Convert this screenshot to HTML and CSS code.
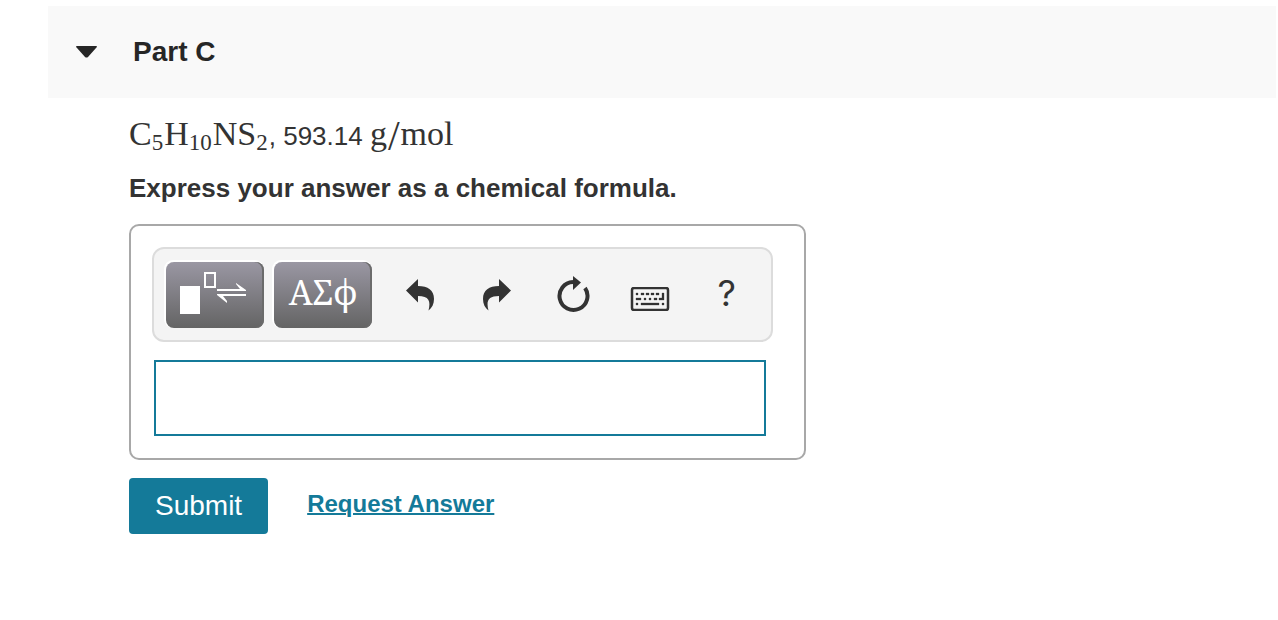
FILE: index.html
```html
<!DOCTYPE html>
<html lang="en">
<head>
<meta charset="utf-8">
<title>Part C</title>
<link rel="stylesheet" href="styles.css">
</head>
<body>
<main class="page">
  <header class="part-header">
    <button class="part-toggle" type="button" aria-expanded="true">
      <svg class="caret" viewBox="0 0 22 12" aria-hidden="true"><path d="M1 0H20Q22 0 20 2L12 11Q10.500 12 9 11L1 2Q-1 0 1 0Z" fill="currentColor"/></svg>
      <span>Part C</span>
    </button>
  </header>
  <section class="content">
    <p class="question"><span class="math">C<sub>5</sub>H<sub>10</sub>NS<sub>2</sub></span>, 593.14 <span class="math">g<span class="slash">/</span>mol</span></p>
    <label class="prompt" for="answer">Express your answer as a chemical formula.</label>
    <div class="answer-box">
      <div class="toolbar" role="toolbar" aria-label="Formula tools">
        <div class="palettes">
          <button class="palette" type="button" aria-label="Templates">
            <svg viewBox="0 0 98 66" fill="#fff" aria-hidden="true"><path d="M14 24H34V52H14Z"/><path d="M38 10H50V26H38ZM40 12V24H48V12Z" fill-rule="evenodd"/><path d="M51 27H74L70 22V21L80 28V29H51Z"/><path d="M80 34H57L61 39V41L51 33V32H80Z"/></svg>
          </button>
          <button class="palette greek" type="button">ΑΣϕ</button>
        </div>
        <div class="tools">
          <button class="tool" type="button" aria-label="Undo">
            <svg width="28" height="32" viewBox="0 0 28 32" aria-hidden="true"><path d="M0 11.500L12 0V7C22 7 28 11 28 20C28 25 26 29 22.500 31.500C25 22 23 17 12 17V23.500Z" fill="currentColor"/></svg>
          </button>
          <button class="tool" type="button" aria-label="Redo">
            <svg width="28" height="32" viewBox="0 0 28 32" aria-hidden="true"><path d="M28 11.500L16 0V7C6 7 0 11 0 20C0 25 2 29 5.500 31.500C3 22 5 17 16 17V23.500Z" fill="currentColor"/></svg>
          </button>
          <button class="tool" type="button" aria-label="Reset">
            <svg width="34" height="38" viewBox="0 0 34 38" aria-hidden="true"><path d="M17 6A14 14 0 1 0 29 12" fill="none" stroke="currentColor" stroke-width="4"/><path d="M17 0L25 6.500L17 14Z" fill="currentColor"/></svg>
          </button>
          <button class="tool keyboard" type="button" aria-label="Keyboard shortcuts">
            <svg width="40" height="24" viewBox="0 0 40 24" aria-hidden="true"><rect x="2" y="1" width="36" height="22" rx="2" fill="none" stroke="currentColor" stroke-width="2.500"/><path d="M6 6h2v2h-2zM11 6h3v2h-3zM16 6h3v2h-3zM21 6h3v2h-3zM26 6h3v2h-3zM32 6h2v7h-5v-2h3zM6 11h5v2h-5zM14 11h2v2h-2zM19 11h2v2h-2zM24 11h3v2h-3zM6 16h2v2h-2zM11 16h18v2h-18zM32 16h2v2h-2z" fill="currentColor" stroke="currentColor" stroke-width=".3"/></svg>
          </button>
          <button class="tool help" type="button" aria-label="Help">?</button>
        </div>
      </div>
      <input class="answer" id="answer" type="text" autocomplete="off">
    </div>
    <div class="actions">
      <button class="submit" type="submit">Submit</button>
      <a class="request" href="#answer">Request Answer</a>
    </div>
  </section>
</main>
</body>
</html>
```
FILE: styles.css
```css
* {
  box-sizing: border-box;
}

body {
  margin: 0;
  background: #fff;
  color: #333;
  font-family: "Liberation Sans", Arial, sans-serif;
  font-size: 26px;
}

button {
  padding: 0;
  border: 0;
  background: none;
  color: inherit;
  font: inherit;
  cursor: pointer;
}

.page {
  padding: 6px 2px 0 48px;
}

.part-header {
  padding: 30px 28px;
  background: #f9f9f9;
}

.part-toggle {
  display: flex;
  align-items: center;
  gap: 35px;
  color: #262626;
  font-size: 28px;
  font-weight: 700;
  line-height: 32px;
}

.caret {
  width: 22px;
  height: 12px;
}

.content {
  padding: 14px 24px 0 81px;
}

.question {
  margin: 0;
  line-height: 44px;
}

.math {
  font-family: "Liberation Serif", "Times New Roman", serif;
  font-size: 34px;
}

.math sub {
  margin-right: 1px;
  font-size: 23px;
  line-height: 0;
  vertical-align: -5px;
}

.slash {
  padding: 0 1px;
  font-size: 42px;
  line-height: 0;
  vertical-align: -5px;
}

.prompt {
  display: block;
  margin-top: 14px;
  font-weight: 700;
  line-height: 32px;
}

.answer-box {
  max-width: 677px;
  margin-top: 20px;
  padding: 21px 31px 22px 21px;
  border: 2px solid #a8a8a8;
  border-radius: 10px;
}

.toolbar {
  display: flex;
  align-items: center;
  gap: 10px;
  height: 95px;
  padding: 0 6px 0 12px;
  border: 2px solid #dcdcdc;
  border-radius: 12px;
  background: #f4f4f4;
}

.palettes {
  display: flex;
  gap: 10px;
}

.palette {
  width: 98px;
  height: 66px;
  border-radius: 8px;
  background: linear-gradient(#9a97a3, #646464);
  box-shadow: -1px -1px 0 1px #fff, inset -2px 0 0 #6b6b6b;
  color: #fff;
}

.palette svg {
  display: block;
  width: 98px;
  height: 66px;
}

.greek {
  padding-bottom: 6px;
  font-family: "Noto Serif", "DejaVu Serif", "Liberation Serif", serif;
  font-size: 34px;
}

.tools {
  display: flex;
  flex: 1;
  align-items: center;
}

.tool {
  display: flex;
  flex: 1;
  align-items: center;
  justify-content: center;
}

.keyboard {
  padding-top: 8px;
}

.help {
  padding-bottom: 4px;
  font-family: Inter, "Open Sans", sans-serif;
  font-size: 36px;
  line-height: 44px;
}

.answer {
  display: block;
  width: calc(100% - 9px);
  height: 76px;
  margin: 18px 7px 0 2px;
  padding: 8px 12px;
  border: 2px solid #147a99;
  border-radius: 0;
  background: #fff;
  color: inherit;
  font: inherit;
  outline: none;
}

.actions {
  display: flex;
  align-items: center;
  gap: 39px;
  margin-top: 18px;
}

.submit {
  padding: 12px 26px;
  border-radius: 4px;
  background: #147a99;
  color: #fff;
  font-size: 28px;
  line-height: 32px;
}

.request {
  padding-bottom: 4px;
  color: #147a99;
  font-size: 24px;
  font-weight: 700;
  text-decoration-thickness: 2px;
}
```
